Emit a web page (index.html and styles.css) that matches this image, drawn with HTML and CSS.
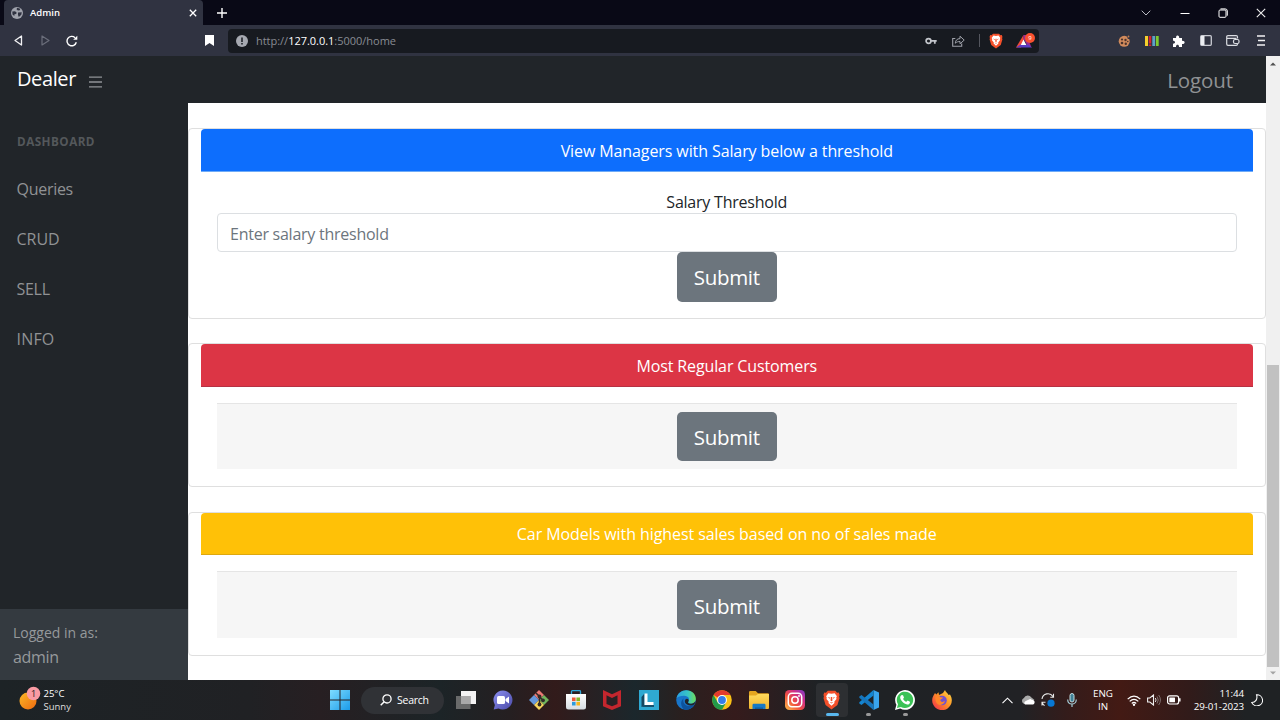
FILE: index.html
```html
<!DOCTYPE html>
<html lang="en">
<head>
<meta charset="utf-8">
<title>Admin</title>
<link rel="stylesheet" href="styles.css">
</head>
<body>
<svg width="0" height="0" class="defs">
  <defs>
    <linearGradient id="gWin" x1="0" y1="0" x2="1" y2="1"><stop offset="0" stop-color="#7fdcff"/><stop offset="1" stop-color="#1b9be8"/></linearGradient>
    <linearGradient id="gSun" x1="0" y1="0" x2="1" y2="1"><stop offset="0" stop-color="#fbb726"/><stop offset="1" stop-color="#ee6a10"/></linearGradient>
    <linearGradient id="gChat" x1="0" y1="0" x2="1" y2="1"><stop offset="0" stop-color="#8b8ff0"/><stop offset="1" stop-color="#4b4aa8"/></linearGradient>
    <linearGradient id="gEdge" x1="0" y1="0" x2="1" y2="0"><stop offset="0" stop-color="#2a9fe0"/><stop offset=".6" stop-color="#38c6c4"/><stop offset="1" stop-color="#6fdc58"/></linearGradient>
    <linearGradient id="gFolder" x1="0" y1="0" x2="0" y2="1"><stop offset="0" stop-color="#ffd95c"/><stop offset="1" stop-color="#f2b52c"/></linearGradient>
    <linearGradient id="gInsta" x1="0" y1="1" x2="1" y2="0"><stop offset="0" stop-color="#fdc04a"/><stop offset=".4" stop-color="#f0503e"/><stop offset=".7" stop-color="#cf2f8a"/><stop offset="1" stop-color="#7b3fd0"/></linearGradient>
    <linearGradient id="gFox" x1="1" y1="0" x2="0" y2="1"><stop offset="0" stop-color="#ffe04a"/><stop offset=".45" stop-color="#ff9326"/><stop offset="1" stop-color="#f0264f"/></linearGradient>
    <linearGradient id="gBag" x1="0" y1="0" x2="0" y2="1"><stop offset="0" stop-color="#ffffff"/><stop offset="1" stop-color="#d7dde2"/></linearGradient>
    <symbol id="brave" viewBox="0 0 20 24">
      <path d="M5.5 1h9l2.2 2.2 2-.2 1 3-.6 1.600.5 2.200-2.500 8.200L10 23.400 2.900 18 .4 9.800l.5-2.200L.3 6l1-3 2 .2z" fill="#f4502a"/>
      <path d="M10 4.500l3.800-.700 2.700 3.600-.8 1.500.3 1.800-2.700 3.500.3 1.500L10 19l-3.600-3.300.3-1.500L4 10.700l.3-1.800-.8-1.500 2.700-3.600z" fill="#fff"/>
      <path d="M5.500 8.300l3 .9-.8 1.300zM14.500 8.300l-3 .9.8 1.300zM9.200 8.500h1.600l.4 4.200-1.200.8-1.200-.8zM7.600 14.300l2.400.8 2.400-.8-2.400 1.800z" fill="#f4502a"/>
    </symbol>
  </defs>
</svg>
<div class="screen">
  <div class="tabstrip">
    <div class="tab">
      <svg class="globe" viewBox="0 0 12 12"><circle cx="6" cy="6" r="6" fill="#a0a3ac"/><path d="M1.300 4.500L4 4.200l1.600 1.300-.4 1.500-1.700.3L3.300 9 1.500 7.500zM6.200.8l3 .9-.4 1.600-1.900.3-1.400-1.300zM7 5.500l3.800-.3-.5 2.600-2.500 2.300-.8-2z" fill="#303341"/></svg>
      <span class="tab-title">Admin</span>
      <svg class="tab-close" viewBox="0 0 8 8"><path d="M.8.8l6.400 6.400M7.200.8L.8 7.200" stroke="#fff" stroke-width="1.300"/></svg>
    </div>
    <svg class="newtab" viewBox="0 0 10 10"><path d="M5 0v10M0 5h10" stroke="#fff" stroke-width="1.400"/></svg>
    <div class="winbtns">
      <span><svg width="10" height="6" viewBox="0 0 10 6"><path d="M.7.700L5 5 9.300.7" fill="none" stroke="#b9bac2"/></svg></span>
      <span><svg width="10" height="10" viewBox="0 0 10 10"><path d="M.5 5.500h9" stroke="#fff"/></svg></span>
      <span><svg width="10" height="10" viewBox="0 0 10 10"><path d="M2.500.9h4.700Q9.300.9 9.300 3v4.700" fill="none" stroke="#fff"/><rect x="1" y="2" width="7" height="7.300" rx="1" fill="none" stroke="#fff"/></svg></span>
      <span><svg width="10" height="10" viewBox="0 0 10 10"><path d="M.8.800l8.400 8.400M9.200.8L.8 9.200" stroke="#eee" stroke-width="1.100"/></svg></span>
    </div>
  </div>

  <div class="toolbar">
    <div class="navbtns">
      <span><svg width="10" height="11" viewBox="0 0 10 11"><path d="M8.500 1v9L2 5.500z" fill="none" stroke="#f2f2f4" stroke-width="1.300" stroke-linejoin="round"/></svg></span>
      <span><svg width="10" height="11" viewBox="0 0 10 11"><path d="M2 1v9L9 5.500z" fill="none" stroke="#6b6e7b" stroke-width="1.200" stroke-linejoin="round"/></svg></span>
      <span><svg width="12" height="12" viewBox="0 0 12 12"><path d="M10.300 7.300A4.700 4.700 0 1 1 9 2.700" fill="none" stroke="#fff" stroke-width="1.400"/><path d="M11.300.8v4H7.200z" fill="#fff"/></svg></span>
    </div>
    <svg class="bookmark" viewBox="0 0 9 11"><path d="M0 0h9v11L4.500 8 0 11z" fill="#fff"/></svg>
    <div class="urlbar">
      <svg width="12" height="12" viewBox="0 0 12 12"><circle cx="6" cy="6" r="6" fill="#a6a9b1"/><path d="M6 2.500v4.500M6 8v1.500" stroke="#171a20" stroke-width="1.500"/></svg>
      <span class="url">http://<b>127.0.0.1</b>:5000/home</span>
      <svg class="key" width="12" height="8" viewBox="0 0 12 8"><circle cx="3.500" cy="4" r="2.400" fill="none" stroke="#c3c5cb" stroke-width="1.700"/><path d="M6 3.800h5.700M9.800 4v2.700" stroke="#c3c5cb" stroke-width="1.800"/></svg>
      <svg class="share" width="13" height="12" viewBox="0 0 13 12"><path d="M3.300 3.500H.7v7.800h9V8.500" fill="none" stroke="#9ea1a9" stroke-width="1.100"/><path d="M3.300 8.200C3.500 5.300 5 3.700 8 3.600V1.200l4.200 3.900L8 8.800V6.500C6 6.500 4.500 7 3.300 8.200z" fill="none" stroke="#9ea1a9"/></svg>
      <i class="divider"></i>
      <svg class="bravei" width="14" height="16"><use href="#brave"/></svg>
      <svg width="20" height="16" viewBox="0 0 20 16"><path d="M7.500 2L0 14.500h5L8 9z" fill="#f04a38"/><path d="M7.500 2l3 0 5 12.500-4-2L7.500 6z" fill="#9e2c8c"/><path d="M0 14.500h16l-4-3H4.500z" fill="#5b3cc4"/><path d="M7.500 6.500L4.800 12h5.600z" fill="#fff"/><circle cx="14" cy="5" r="5" fill="#f9502f"/><text x="14" y="7.300" text-anchor="middle" class="badge">9</text></svg>
    </div>
    <div class="exts">
      <span><svg width="13" height="12" viewBox="0 0 13 12"><circle cx="6.200" cy="6.300" r="5.500" fill="#d08a5c"/><g fill="#4a332d"><circle cx="4" cy="4.500" r="1.100"/><circle cx="7.500" cy="5" r="1.200"/><circle cx="4" cy="8" r="1.300"/><circle cx="7.800" cy="8.700" r="1.200"/><circle cx="9.800" cy="6.500" r=".8"/></g><path d="M8.800 0l3.700 3.800-2.700.2z" fill="#303341"/><circle cx="10.500" cy="1.500" r=".9" fill="#c47d50"/></svg></span>
      <span><svg width="14" height="10" viewBox="0 0 14 10"><path d="M1.500 0v10" stroke="#f5d02c" stroke-width="3"/><path d="M5 0v7.500M5 8.500v1.500" stroke="#d92330" stroke-width="2.500"/><path d="M8.700 0v10" stroke="#5ea2c9" stroke-width="2.800"/><path d="M12.300 0v10" stroke="#7ecb2f" stroke-width="2.800"/></svg></span>
      <span><svg width="13" height="12" viewBox="0 0 13 12"><path d="M1 3h3.200C3.200 0 7.500-.8 7.200 3H10v2.700c3.500-.2 3.500 3.600 0 3.200V12H7c.2-2.900-3.200-2.900-3 0H1V8.700c2.700 0 2.700-2.900 0-2.900z" fill="#fff"/></svg></span>
      <span><svg width="12" height="11" viewBox="0 0 12 11"><rect x=".7" y=".7" width="10.600" height="9.600" rx="1" fill="none" stroke="#c9cbd2" stroke-width="1.300"/><path d="M1 1h3.500v9H1z" fill="#eceef2"/></svg></span>
      <span><svg width="14" height="11" viewBox="0 0 14 11"><path d="M11.500 3.500V2q0-1.300-1.300-1.300H2Q.7.700.7 2v7q0 1.300 1.300 1.300h8.200q1.300 0 1.300-1.300M1 3.300h9.500" fill="none" stroke="#dadce1" stroke-width="1.200"/><rect x="7.500" y="4.500" width="5.500" height="4" rx="1.500" fill="#303341" stroke="#dadce1" stroke-width="1.200"/></svg></span>
      <span class="menu"><svg width="8" height="11" viewBox="0 0 8 11"><path d="M0 1h8M1 5.500h7M0 10h8" stroke="#f2f2f4" stroke-width="1.300"/></svg></span>
    </div>
  </div>

  <div class="page">
    <div class="app">
      <header class="navbar">
        <span class="brand">Dealer</span>
        <svg class="burger" viewBox="0 0 13 12"><path d="M0 1.200h13M0 6h13M0 10.800h13" stroke="#909396" stroke-width="1.300"/></svg>
        <a class="logout">Logout</a>
      </header>
      <div class="body">
        <nav class="sidebar">
          <div class="heading">DASHBOARD</div>
          <a class="q">Queries</a>
          <a class="c">CRUD</a>
          <a class="s">SELL</a>
          <a class="i">INFO</a>
          <div class="sidefoot"><div class="small">Logged in as:</div><div class="user">admin</div></div>
        </nav>
        <main class="content">
          <section class="card first">
            <div class="card-header blue"><span class="h1">View Managers with Salary below a threshold</span></div>
            <form class="card-form">
              <label>Salary Threshold</label>
              <div class="field"><span>Enter salary threshold</span></div>
              <button type="button">Submit</button>
            </form>
          </section>
          <section class="card second">
            <div class="card-header red"><span class="h2">Most Regular Customers</span></div>
            <div class="card-footer"><button type="button">Submit</button></div>
          </section>
          <section class="card third">
            <div class="card-header yellow"><span class="h3">Car Models with highest sales based on no of sales made</span></div>
            <div class="card-footer"><button type="button">Submit</button></div>
          </section>
        </main>
      </div>
    </div>
    <div class="scrollbar">
      <svg width="6" height="4" viewBox="0 0 8 5"><path d="M0 4.500L4 .5l4 4z" fill="#505050"/></svg>
      <div class="thumb"></div>
      <svg width="6" height="4" viewBox="0 0 8 5"><path d="M0 .5h8l-4 4z" fill="#a3a3a3"/></svg>
    </div>
  </div>

  <div class="taskbar">
    <div class="weather">
      <svg width="22" height="24" viewBox="0 0 22 24"><circle cx="9" cy="15" r="8.500" fill="url(#gSun)"/><circle cx="14.500" cy="7.500" r="6.800" fill="#f99ba3"/><text x="14.500" y="11" text-anchor="middle" class="wbadge">1</text></svg>
      <div class="wtext"><div class="temp">25°C</div><div>Sunny</div></div>
    </div>
    <div class="apps">
      <span><svg width="20" height="20" viewBox="0 0 20 20"><path d="M0 0h9.500v9.500H0zM10.500 0H20v9.500h-9.500zM0 10.500h9.500V20H0zM10.500 10.500H20V20h-9.500z" fill="url(#gWin)"/></svg></span>
      <div class="search"><svg width="12" height="12" viewBox="0 0 12 12"><circle cx="7" cy="4.900" r="4.100" fill="none" stroke="#fff" stroke-width="1.300"/><path d="M4 8L.7 11.300" stroke="#fff" stroke-width="1.500"/></svg><span>Search</span></div>
      <span><svg width="20" height="18" viewBox="0 0 20 18"><path d="M5 0h15v13H5z" fill="#f3f3f3"/><path d="M0 5h14.500v13H0z" fill="#777" opacity=".85"/><path d="M5 5h9.500v8H5z" fill="#a9a9a9"/></svg></span>
      <span><svg width="20" height="20" viewBox="0 0 20 20"><path d="M10 .5a9.500 9.500 0 1 1-4.500 17.900L.7 19.500l1.200-4.600A9.500 9.500 0 0 1 10 .5z" fill="url(#gChat)"/><rect x="4" y="6" width="8" height="8" rx="1.500" fill="#fff"/><path d="M12.500 9l3.500-2.500v7L12.500 11z" fill="#fff"/></svg></span>
      <span><svg width="20" height="20" viewBox="0 0 20 20"><path d="M10 0l5 5-5 5-5-5z" fill="#e87973"/><path d="M5 5l5 5-5 5-5-5z" fill="#6597dc"/><path d="M15 5l5 5-5 5-5-5z" fill="#70b45c"/><path d="M10 10l5 5-5 5-5-5z" fill="#f7d65e"/><path d="M7 3l3.500 3.500V16M10.500 7l4 3.500" stroke="#302b28" stroke-width="1.500" fill="none"/><g fill="#302b28"><circle cx="10.500" cy="6.500" r="1.900"/><circle cx="14" cy="10.300" r="1.900"/><circle cx="10.500" cy="14.500" r="1.900"/></g></svg></span>
      <span><svg width="20" height="20" viewBox="0 0 20 20"><path d="M5.500 5V1.500q0-.8.800-.8h7.400q.8 0 .8.800V5" fill="none" stroke="#2fa7d8" stroke-width="1.300"/><path d="M0 4h20v13q0 2.500-2.500 2.500h-15Q0 19.500 0 17z" fill="url(#gBag)"/><path d="M6 7.500h3.600v3.600H6z" fill="#ed5a38"/><path d="M10.400 7.500H14v3.600h-3.600z" fill="#82b927"/><path d="M6 11.900h3.600v3.600H6z" fill="#2b9bdd"/><path d="M10.400 11.900H14v3.600h-3.600z" fill="#f4b51e"/></svg></span>
      <span><svg width="18" height="20" viewBox="0 0 18 20"><path d="M0 0l9 4.200L18 0v16.200L9 20l-9-3.800z" fill="#c4262e"/><path d="M3.500 5.300L9 8l5.500-2.700v8.600L9 16.200l-5.500-2.300z" fill="#292125"/></svg></span>
      <span><svg width="20" height="20" viewBox="0 0 20 20"><path d="M0 0h20v20H0z" fill="#2fa9d2"/><path d="M2.500 7L5.500 3.500v12L2.500 17z" fill="#17475f"/><path d="M2.500 17l3-2h9.500v2z" fill="#16516c"/><path d="M5.500 3.500H8.500v8.500h6V15h-9z" fill="#fff"/></svg></span>
      <span><svg width="20" height="20" viewBox="0 0 20 20"><circle cx="10" cy="10" r="9.800" fill="#1875c9"/><path d="M.4 8.500C1.600 3.200 5.700.2 10.300.2c5.600 0 9.500 4 9.500 8.500 0 3.500-2.500 5-4.900 5-2.700 0-3.300-1.200-2.300-2.400 1.200-1.800.3-5.400-4.400-5.500C4.800 5.700 1.700 6.800.4 8.500z" fill="url(#gEdge)"/><path d="M7.600 8.500c-1.500 4 2 8 6.800 7.500 1.800-.2 3.200-.9 4.200-1.700-1.900 3.800-5.800 5.900-9.800 5.500C4.700 17.500 3.700 11.200 7.600 8.500z" fill="#0d529c"/><path d="M12.500 11.300c-1 1.200-.4 2.400 2.400 2.400 1.900 0 3.600-.8 4.400-2.400l-.7 3c-2 1.400-5.300 1.700-7.600.3-2.200-1.400-2.700-3.700-1.600-5.200 1.500-1.800 4.200-.1 3.100 1.900z" fill="#20242a"/></svg></span>
      <span><svg width="20" height="20" viewBox="0 0 20 20"><circle cx="10" cy="10" r="9.800" fill="#fbc116"/><path d="M10 10L1.500 5.100A9.800 9.800 0 0 1 18.500 5.100H10z" fill="#e33b2e"/><path d="M1.500 5.100A9.800 9.800 0 0 0 10 19.800l4.200-7.300H5.800z" fill="#229a49"/><circle cx="10" cy="10" r="4.900" fill="#fff"/><circle cx="10" cy="10" r="3.900" fill="#357de8"/></svg></span>
      <span><svg width="20" height="18" viewBox="0 0 20 18"><path d="M0 1.200Q0 0 1.200 0h5.500L9 2.300h9.800q1.200 0 1.200 1.200V17H0z" fill="#e5a51f"/><path d="M0 4.500h7L9 3h11v14q0 1-1 1H1q-1 0-1-1z" fill="url(#gFolder)"/><path d="M3.500 18v-4q0-1.200 1.200-1.200h10.600q1.200 0 1.200 1.200v4z" fill="#1679c6"/><path d="M6 18v-1.500h8V18z" fill="#0f5d9f"/></svg></span>
      <span><svg width="20" height="20" viewBox="0 0 20 20"><rect width="20" height="20" rx="4.500" fill="url(#gInsta)"/><rect x="3.300" y="3.300" width="13.400" height="13.400" rx="3.700" fill="none" stroke="#fff" stroke-width="1.500"/><circle cx="10" cy="10" r="3.200" fill="none" stroke="#fff" stroke-width="1.500"/><circle cx="14" cy="6" r=".9" fill="#fff"/></svg></span>
      <span class="active"><svg width="17" height="20"><use href="#brave"/></svg><i></i></span>
      <span><svg width="20" height="20" viewBox="0 0 20 20"><path d="M14.500 0L20 2.500v15L14.500 20z" fill="#39a5ee"/><path d="M14.500 0v5.500L2.500 15 .3 13.400v-1.100z" fill="#1485d1"/><path d="M.3 6.600L2.500 5l12 9.500V20L.3 7.700z" fill="#1676bd"/></svg><i class="dot"></i></span>
      <span><svg width="20" height="20" viewBox="0 0 20 20"><path d="M0 20l1.400-5.200A9.900 9.900 0 1 1 5.200 18.600z" fill="#fff"/><path d="M1.900 18.100l1.100-3.900A8.200 8.200 0 1 1 5.900 17z" fill="#3bc256"/><path d="M6.800 5.100l1.200.1 1 2.400-.9 1.300c.8 1.500 1.900 2.300 3.300 2.900l1.200-1.300 2.400 1.200c.2 2-1.300 3-2.900 2.800C8.500 13.900 5.500 10.400 5.200 7.800c-.1-1.300.7-2.300 1.600-2.700z" fill="#fff"/></svg><i class="dot"></i></span>
      <span><svg width="20" height="20" viewBox="0 0 20 20"><path d="M1.500 5.500L3 3l1.300 1.500L6.500 2.200 7 5l4-2 2-3c.2 2 3 3 3.600 5L18 4.500c1.200 2 1.900 4 1.800 6A9.800 9.800 0 1 1 1.500 5.500z" fill="url(#gFox)"/><circle cx="10" cy="10.500" r="4.800" fill="#7252cf"/><path d="M3.500 6.500c2-1 4-.4 5 .7l2.500.2c-.2 1.300-2 1.400-2.500 2.300-.6 2 2 3 4.400 1.400-.6 3-3.500 4.400-6 3.600C4 13.500 3 10 3.500 6.500z" fill="#ff8729"/></svg></span>
    </div>
    <div class="tray">
      <svg class="t1" width="11" height="7" viewBox="0 0 11 7"><path d="M.5 6.200l5-5 5 5" fill="none" stroke="#fff" stroke-width="1.100"/></svg>
      <svg class="t2" width="14" height="10" viewBox="0 0 14 10"><path d="M3.200 9A3.200 3.200 0 0 1 2.900 3 4.200 4.200 0 0 1 10.400 2.500L13.500 5z" fill="#aaa"/><path d="M4 9.500q-1.800-2 .8-3.500l3.800-1.700q1-.7 2 .4c2 0 3 1 3 2.500s-1 2.300-2.500 2.300z" fill="#fff"/></svg>
      <svg class="t3" width="14" height="14" viewBox="0 0 14 14"><path d="M1 6A6 6 0 0 1 12 3.500M12.500.8v3.400H9.300M3.600 12.600A6 6 0 0 1 1.200 9.300M4.500 9.300H1v3.300" fill="none" stroke="#e8e8e8" stroke-width="1.100"/><circle cx="10" cy="10.200" r="3.600" fill="#0878d4"/></svg>
      <svg class="t4" width="10" height="14" viewBox="0 0 10 14"><rect x="3" y=".5" width="4" height="8.500" rx="2" fill="#3f8196" stroke="#c3dce2"/><path d="M.7 6.500c0 6 8.600 6 8.600 0M5 11v3" fill="none" stroke="#a3cbd6" stroke-width="1.200"/></svg>
      <div class="lang"><div>ENG</div><div>IN</div></div>
      <svg class="t5" width="14" height="11" viewBox="0 0 14 11"><path d="M.7 4.200q6.300-6.300 12.600 0M2.700 6.400q4.300-4.200 8.600 0M4.800 8.500q2.200-2.100 4.400 0" fill="none" stroke="#fff" stroke-width="1.200"/><circle cx="7" cy="9.700" r="1.200" fill="#fff"/></svg>
      <svg class="t6" width="14" height="12" viewBox="0 0 14 12"><path d="M.6 4h2.200L6.500 1v10L2.800 8H.6z" fill="none" stroke="#eee" stroke-width="1.100"/><path d="M8.300 4q1.500 2 0 4" fill="none" stroke="#ddd"/><path d="M10 2.500q2.500 3.500 0 7M11.700 1q3.500 5 0 10" fill="none" stroke="#7e706f"/></svg>
      <svg class="t7" width="14" height="10" viewBox="0 0 14 10"><rect x=".6" y=".8" width="11" height="8.200" rx="2" fill="none" stroke="#fff" stroke-width="1.200"/><rect x="2.300" y="2.500" width="5.700" height="4.800" rx=".5" fill="#fff"/><path d="M12.800 3.300v3.200" stroke="#fff" stroke-width="1.500"/></svg>
      <div class="clock"><div>11:44</div><div>29-01-2023</div></div>
      <svg class="t8" width="12" height="12" viewBox="0 0 12 12"><path d="M5.500.7A5.600 5.600 0 1 1 .8 8.500C4.300 8.500 7 5.500 5.500.700z" fill="none" stroke="#fff" stroke-width="1.100"/></svg>
    </div>
  </div>
</div>
</body>
</html>
```
FILE: styles.css
```css
* { box-sizing: border-box; }
body { margin: 0; font-family: "Open Sans", "Noto Sans", sans-serif; }
.defs { display: block; height: 0; }
svg { display: block; flex: none; }
.screen { width: 1280px; height: 720px; display: flex; flex-direction: column; overflow: hidden; white-space: nowrap; }

/* Browser chrome */
.tabstrip { height: 25px; background: #090916; display: flex; align-items: center; padding-left: 4px; }
.tab { width: 199px; height: 25px; background: #303341; border-radius: 4px 4px 0 0; display: flex; align-items: center; padding: 0 6px 0 7px; }
.globe { width: 12px; height: 12px; }
.tab-title { margin-left: 7px; flex: 1; color: #fff; font-size: 9.5px; font-weight: 600; }
.tab-close { width: 8px; height: 8px; }
.newtab { width: 10px; height: 10px; margin-left: 14px; }
.winbtns { margin-left: auto; display: flex; }
.winbtns span { width: 38.2px; height: 25px; display: flex; align-items: center; justify-content: center; }
.toolbar { height: 31px; background: #303341; display: flex; align-items: center; padding-right: 5px; }
.navbtns { display: flex; padding-left: 5px; }
.navbtns span { width: 26.8px; display: flex; align-items: center; justify-content: center; }
.bookmark { width: 9px; height: 11px; margin-left: 119.6px; }
.urlbar { width: 811px; height: 24px; margin-left: 14px; background: #171a20; border-radius: 4px; display: flex; align-items: center; padding: 0 3px 0 8px; }
.url { margin-left: 8px; flex: 1; font-size: 11px; color: #898c93; letter-spacing: -.02px; }
.url b { color: #fff; font-weight: 400; }
.share { margin-left: 15px; }
.divider { width: 1px; height: 13px; background: #54565e; margin: 0 9px 0 14px; }
.bravei { margin-right: 13px; }
.badge { font: 6px "Open Sans", sans-serif; fill: #fff; }
.exts { margin-left: auto; display: flex; }
.exts span { width: 27px; display: flex; align-items: center; justify-content: center; }
.exts .menu { width: 28.600px; padding-left: 1px; }

/* Page */
.page { height: 624px; display: flex; }
.app { width: 1266px; display: flex; flex-direction: column; }
.navbar { height: 47px; background: #212529; display: flex; align-items: center; padding: 0 33px 0 17px; }
.brand { width: 72px; padding-bottom: 2px; color: #fff; font-size: 20px; line-height: 28px; letter-spacing: -.4px; }
.burger { width: 13px; height: 12px; margin-top: 4px; }
.logout { margin-left: auto; color: #909294; font-size: 20.5px; line-height: 28px; letter-spacing: -.1px; }
.body { flex: 1; display: flex; min-height: 0; }
.sidebar { width: 187.500px; background: #212529; color: #909294; display: flex; flex-direction: column; font-size: 16px; line-height: 24px; }
.heading { padding: 28px 17px 0; height: 61px; font-size: 11.700px; line-height: 20px; font-weight: 700; letter-spacing: .48px; color: #54585b; }
.sidebar a { height: 50px; padding: 13px 16.500px; }
.sidebar .q, .sidebar .s { letter-spacing: -.28px; }
.sidebar .i { letter-spacing: .2px; }
.sidefoot { margin-top: auto; height: 71px; background: #343a40; padding: 12px 13px; color: #96999c; }
.small { font-size: 14px; }
.user { letter-spacing: -.3px; }
.content { flex: 1; background: #fff; padding-top: 25px; }
.card { border: 1px solid #dfdfdf; border-radius: 4px; padding: 0 12px; color: #212529; font-size: 16px; }
.first { height: 191px; margin-bottom: 24px; }
.second { height: 144px; margin-bottom: 25px; }
.third { height: 144px; }
.card-header { height: 43px; border-radius: 4px 4px 0 0; border-bottom: 1px solid rgba(0,0,0,.125); color: #fff; display: flex; align-items: center; justify-content: center; padding-top: 1px; }
.h1 { letter-spacing: -.1px; }
.h2 { letter-spacing: -.12px; }
.h3 { letter-spacing: -.075px; }
.blue { background: #0d6efd; border-bottom-color: #6fabf7; }
.red { background: #dc3545; border-bottom-color: #b63143; }
.yellow { height: 42px; background: #ffc107; border-bottom-color: #dda80f; }
.card-form { padding: 17px 16.500px 0; display: flex; flex-direction: column; align-items: center; }
label { line-height: 26px; height: 24px; letter-spacing: -.22px; }
.field { width: 100%; height: 39px; border: 1px solid #dcdfe2; border-radius: 4px; color: #6c757d; padding: 2px 12px 0; display: flex; align-items: center; letter-spacing: -.25px; }
button { width: 100px; height: 49.500px; border: 0; border-radius: 5px; background: #6c757d; color: #fff; font: 20.5px "Open Sans", sans-serif; letter-spacing: -.3px; padding: 1px 0 0; }
.card-footer { margin: 16px 16.500px 0; height: 66px; background: #f6f6f6; border-top: 1px solid #e5e5e5; display: flex; align-items: center; justify-content: center; }
.third .card-footer { height: 67px; }
.scrollbar { width: 14px; background: #f0f0f0; display: flex; flex-direction: column; align-items: center; padding: 6px 0 5px; }
.thumb { width: 12px; height: 302px; margin: auto 1px 4px; background: #c1c1c1; }

/* Taskbar */
.taskbar { height: 40px; color: #fff; display: flex; align-items: center; background: linear-gradient(90deg, #1d2326 0, #202124 250px, #271f22 320px, #1c2427 440px, #251f21 510px, #321b1b 555px, #1b272c 635px, #29201f 680px, #351b1c 735px, #1e2225 820px, #212225 1020px, #331c1b 1065px, #431a14 1120px, #311b1a 1190px, #1f2224 1245px); }
.weather { width: 321.700px; padding-left: 19px; display: flex; align-items: center; font-size: 9.500px; line-height: 13.500px; }
.weather svg { margin-bottom: 4px; }
.wtext { margin-left: 2.500px; color: #dedede; }
.temp { color: #fff; }
.wbadge { font: 9px "Open Sans", sans-serif; fill: #222; }
.apps { display: flex; align-items: center; }
.apps > span { width: 36.600px; height: 40px; display: flex; align-items: center; justify-content: center; position: relative; }
.search { width: 83px; height: 27px; margin: 0 3.600px 0 2.800px; border-radius: 14px; background: #303236; display: flex; align-items: center; padding-left: 19px; font-size: 10.500px; letter-spacing: -.4px; }
.search span { margin-left: 5px; letter-spacing: -.3px; }
.apps .active::before { content: ""; position: absolute; left: 2px; top: 3px; width: 32px; height: 34px; border-radius: 4px; background: #2d2f32; }
.active svg { position: relative; }
.apps i { position: absolute; bottom: 4px; left: 12px; width: 13px; height: 3px; border-radius: 2px; background: #59b8ef; }
.apps i.dot { left: 16px; width: 5px; background: #999; }
.tray { flex: 1; display: flex; align-items: center; font-size: 9.800px; line-height: 13.500px; padding-left: 42px; }
.t2 { margin-left: 8px; }
.t3 { margin-left: 6px; }
.t4 { margin-left: 12px; }
.lang { width: 24px; margin-left: 14px; text-align: center; }
.t5 { margin-left: 12px; }
.t6 { margin-left: 6px; }
.t7 { margin-left: 6px; }
.clock { width: 56px; margin-left: 7px; text-align: right; letter-spacing: -.08px; }
.t8 { margin-left: 7px; }
```
